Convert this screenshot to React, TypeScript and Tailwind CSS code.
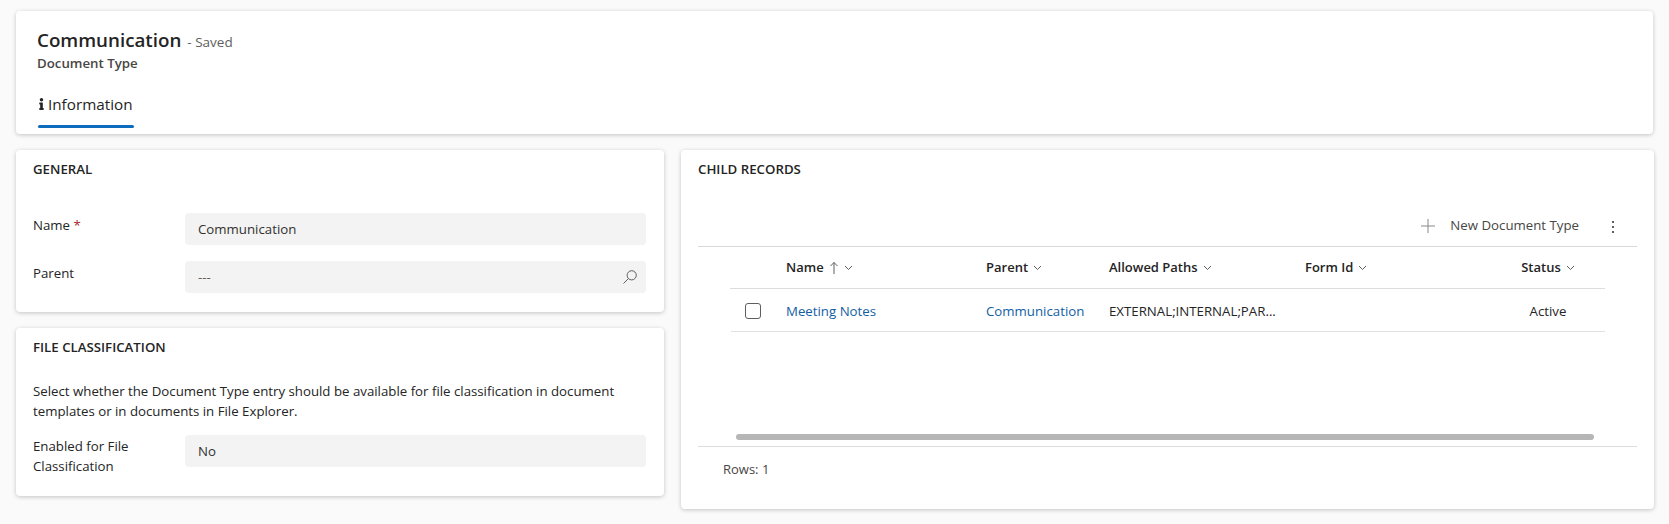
import { FaInfo } from 'react-icons/fa';

const font = "font-['Open_Sans','Noto_Sans',sans-serif]";

// small chevron used in the grid column headers
const Chevron = () => (
  <svg width="9" height="9" viewBox="0 0 9 9" className="ml-[5px] text-[#605e5c]" fill="none" stroke="currentColor" strokeWidth="1">
    <path d="M1 3l3.5 3.5L8 3" />
  </svg>
);

const Card = ({ className, children }: { className: string; children: React.ReactNode }) => (
  <section className={`bg-white rounded-[4px] shadow-[0_1px_4px_rgba(0,0,0,0.22)] ${className}`}>{children}</section>
);

const Field = ({ children, icon, muted }: { children: React.ReactNode; icon?: React.ReactNode; muted?: boolean }) => (
  <div className={`h-8 flex-1 bg-[#f3f3f3] rounded-[4px] pl-[13px] pr-[8px] flex items-center justify-between text-[13.25px] ${muted ? 'text-[#605e5c]' : 'text-[#323130]'}`}>
    <span className="pt-[2px]">{children}</span>
    {icon}
  </div>
);

const SearchIcon = () => (
  <svg width="16" height="16" viewBox="0 0 16 16" fill="none" stroke="#605e5c" strokeWidth="1">
    <circle cx="9.7" cy="6.3" r="4.6" />
    <path d="M6.4 9.6L1.5 14.5" />
  </svg>
);

const columns = 'grid grid-cols-[56px_200px_123px_196px_186px_114px] items-center';

export default function App() {
  return (
    <div className={`${font} min-h-screen bg-[#fafafa] pt-[11px] px-4 text-[#242424]`}>
      <Card className="h-[123px] pl-[21px] pt-[15px]">
        <div className="flex items-baseline pt-[1px]">
          <h1 className="text-[18.75px] leading-[26px] font-semibold">Communication</h1>
          <span className="ml-[6px] text-[13.5px] text-[#605e5c]">- Saved</span>
        </div>
        <div className="text-[13.25px] leading-[20px] font-semibold text-[#484644]">Document Type</div>
        <div className="inline-flex flex-col mt-[19px]">
          <div className="flex items-center h-[24px] text-[15.25px] font-medium gap-[2px]">
            <FaInfo className="w-[9px] h-[12px]" />
            <span>Information</span>
          </div>
          <div className="h-[3px] mt-[9px] ml-[1px] rounded-[2px] bg-[#0f6cbd] w-[96px]" />
        </div>
      </Card>

      <div className="grid grid-cols-[648px_973px] gap-x-[17px] mt-[16px] items-start">
        <div className="flex flex-col gap-[16px]">
          <Card className="h-[162px] px-[17px] pt-[9px]">
            <h2 className="text-[13.25px] leading-[20px] font-semibold">GENERAL</h2>
            <div className="mt-[34px] flex pr-[1px]">
              <div className="w-[152px] text-[13.25px] leading-[24px]">
                Name <span className="text-[#a4262c]">*</span>
              </div>
              <Field>Communication</Field>
            </div>
            <div className="mt-[16px] flex pr-[1px]">
              <div className="w-[152px] text-[13.25px] leading-[24px]">Parent</div>
              <Field icon={<SearchIcon />} muted>---</Field>
            </div>
          </Card>

          <Card className="h-[168px] px-[17px] pt-[9px]">
            <h2 className="text-[13.25px] leading-[20px] font-semibold">FILE CLASSIFICATION</h2>
            <p className="mt-[24px] text-[13.25px] leading-[20px] w-[600px]">
              Select whether the Document Type entry should be available for file classification in document templates or in documents in File Explorer.
            </p>
            <div className="mt-[14px] flex pr-[1px]">
              <div className="w-[152px] text-[13.25px] leading-[20px] pt-[1px]">
                Enabled for File
                <br />
                Classification
              </div>
              <Field>No</Field>
            </div>
          </Card>
        </div>

        <Card className="h-[359px] px-[17px] pt-[9px]">
          <h2 className="text-[13.25px] leading-[20px] font-semibold">CHILD RECORDS</h2>
          <div className="mt-[32px] h-[36px] pb-[6px] flex items-center justify-end border-b border-[#d9d9d9] pr-[22px]">
            <svg width="16" height="16" viewBox="0 0 16 16" fill="none" stroke="#8a8886" strokeWidth="1">
              <path d="M8 1v14M1 8h14" />
            </svg>
            <span className="ml-[14px] text-[13.25px] text-[#484644]">New Document Type</span>
            <svg width="4" height="14" viewBox="0 0 4 14" className="ml-[32px] mt-[2px]" fill="#605e5c">
              <rect x="1" y="1" width="2" height="2" />
              <rect x="1" y="6" width="2" height="2" />
              <rect x="1" y="11" width="2" height="2" />
            </svg>
          </div>

          <div className="ml-[32px] w-[875px]">
            <div className={`${columns} h-[42px] border-b border-[#dddddd] text-[13px] font-semibold`}>
              <div />
              <div className="flex items-center">
                Name
                <svg width="10" height="14" viewBox="0 0 10 14" className="ml-[5px]" fill="none" stroke="#605e5c" strokeWidth="1">
                  <path d="M5 13V1.5M1.5 5L5 1.5 8.5 5" />
                </svg>
                <Chevron />
              </div>
              <div className="flex items-center">Parent<Chevron /></div>
              <div className="flex items-center">Allowed Paths<Chevron /></div>
              <div className="flex items-center">Form Id<Chevron /></div>
              <div className="flex items-center justify-center">Status<Chevron /></div>
            </div>
            <div className="ml-[1px]">
              <div className="grid grid-cols-[55px_200px_123px_196px_186px_114px] items-center h-[43px] border-b border-[#e1e1e1] text-[13.25px]">
                <div className="pl-[14px] pt-[1px]">
                  <div className="w-4 h-4 rounded-[3px] border border-[#605e5c]" />
                </div>
                <div className="text-[#115ea3] pt-[3px]">Meeting Notes</div>
                <div className="text-[#115ea3] pt-[3px]">Communication</div>
                <div className="whitespace-nowrap pt-[3px]">EXTERNAL;INTERNAL;PAR...</div>
                <div />
                <div className="text-center pt-[3px]">Active</div>
              </div>
            </div>
          </div>

          <div className="ml-[38px] mt-[102px] h-[6px] w-[858px] rounded-[3px] bg-[#b6b6b6]" />
          <div className="mt-[6px] border-t border-[#dddddd] pl-[25px] pt-[12px] text-[13px] leading-[20px] text-[#484644]">Rows: 1</div>
        </Card>
      </div>
    </div>
  );
}
